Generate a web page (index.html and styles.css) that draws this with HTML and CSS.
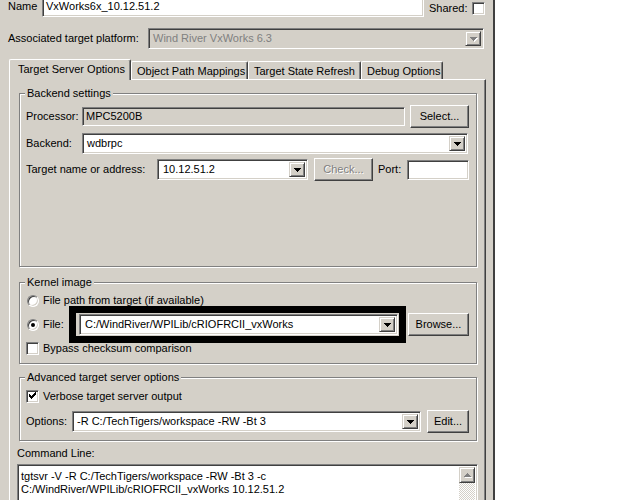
FILE: index.html
```html
<!DOCTYPE html>
<html lang="en">
    <head>
        <meta charset="UTF-8">
        <title>New Target Server Connection</title>
        <link rel="stylesheet" href="styles.css">
    </head>
    <body>
        <div class="dialog">
            <!-- Name -->
            <div class="row name-row">
                <span class="lbl name-lbl">Name</span>
                <div class="field name-field">VxWorks6x_10.12.51.2</div>
                <span class="lbl shared-lbl">Shared:</span>
                <span class="check shared-check"></span>
            </div>

            <!-- Platform -->
            <div class="row platform-row">
                <span class="lbl platform-lbl">Associated target platform:</span>
                <div class="combo disabled platform-combo">
                    <span class="combo-text">Wind River VxWorks 6.3</span>
                    <span class="drop"><svg width="7" height="4"><path d="M0 0h7v1H0zM1 1h5v1H1zM2 2h3v1H2zM3 3h1v1H3z"/></svg></span>
                </div>
            </div>

            <!-- Tabs -->
            <div class="tabs">
                <div class="tab active tab-1">Target Server Options</div>
                <div class="tab tab-2">Object Path Mappings</div>
                <div class="tab tab-3">Target State Refresh</div>
                <div class="tab tab-4">Debug Options</div>
            </div>

            <div class="panel">
                <!-- Backend settings -->
                <div class="group backend-group">
                    <span class="legend">Backend settings</span>
                    <div class="row form-row">
                        <span class="lbl short-lbl">Processor:</span>
                        <div class="field readonly processor-field">MPC5200B</div>
                        <button class="btn select-btn">Select...</button>
                    </div>
                    <div class="row form-row backend-row">
                        <span class="lbl short-lbl">Backend:</span>
                        <div class="combo backend-combo">
                            <span class="combo-text">wdbrpc</span>
                            <span class="drop"><svg width="7" height="4"><path d="M0 0h7v1H0zM1 1h5v1H1zM2 2h3v1H2zM3 3h1v1H3z"/></svg></span>
                        </div>
                    </div>
                    <div class="row form-row target-row">
                        <span class="lbl target-lbl">Target name or address:</span>
                        <div class="combo target-combo">
                            <span class="combo-text">10.12.51.2</span>
                            <span class="drop"><svg width="7" height="4"><path d="M0 0h7v1H0zM1 1h5v1H1zM2 2h3v1H2zM3 3h1v1H3z"/></svg></span>
                        </div>
                        <button class="btn disabled check-btn">Check...</button>
                        <span class="lbl port-lbl">Port:</span>
                        <div class="field port-field"></div>
                    </div>
                </div>

                <!-- Kernel image -->
                <div class="group kernel-group">
                    <span class="legend">Kernel image</span>
                    <div class="row opt-row">
                        <span class="radio"></span>
                        <span class="lbl opt-lbl">File path from target (if available)</span>
                    </div>
                    <div class="row form-row file-row">
                        <span class="radio checked"></span>
                        <span class="lbl file-lbl">File:</span>
                        <div class="combo file-combo">
                            <span class="combo-text">C:/WindRiver/WPILib/cRIOFRCII_vxWorks</span>
                            <span class="drop"><svg width="7" height="4"><path d="M0 0h7v1H0zM1 1h5v1H1zM2 2h3v1H2zM3 3h1v1H3z"/></svg></span>
                            <span class="highlight"></span>
                        </div>
                        <button class="btn browse-btn">Browse...</button>
                    </div>
                    <div class="row opt-row bypass-row">
                        <span class="check"></span>
                        <span class="lbl opt-lbl">Bypass checksum comparison</span>
                    </div>
                </div>

                <!-- Advanced options -->
                <div class="group advanced-group">
                    <span class="legend">Advanced target server options</span>
                    <div class="row opt-row">
                        <span class="check"><svg width="9" height="9"><path d="M1 2h1v3H1zM2 3h1v3H2zM3 4h1v3H3zM4 3h1v3H4zM5 2h1v3H5zM6 1h1v3H6zM7 0h1v3H7z"/></svg></span>
                        <span class="lbl opt-lbl verbose-lbl">Verbose target server output</span>
                    </div>
                    <div class="row form-row options-row">
                        <span class="lbl options-lbl">Options:</span>
                        <div class="combo options-combo">
                            <span class="combo-text">-R C:/TechTigers/workspace -RW -Bt 3</span>
                            <span class="drop"><svg width="7" height="4"><path d="M0 0h7v1H0zM1 1h5v1H1zM2 2h3v1H2zM3 3h1v1H3z"/></svg></span>
                        </div>
                        <button class="btn edit-btn">Edit...</button>
                    </div>
                </div>

                <!-- Command line -->
                <div class="cmd-lbl">Command Line:</div>
                <div class="cmd-box">
                    <div class="cmd-text">tgtsvr -V -R C:/TechTigers/workspace -RW -Bt 3 -c<br>C:/WindRiver/WPILib/cRIOFRCII_vxWorks 10.12.51.2</div>
                    <div class="scrollbar">
                        <span class="scroll-up"><svg width="7" height="4"><path d="M3 0h1v1H3zM2 1h3v1H2zM1 2h5v1H1zM0 3h7v1H0z"/></svg></span>
                        <span class="scroll-track"></span>
                    </div>
                </div>
            </div>
        </div>
    </body>
</html>
```

FILE: styles.css
```css
* {
    box-sizing: border-box;
}
body {
    margin: 0;
    background-color: #ffffff;
    font-family: "Liberation Sans", Arial, sans-serif;
    font-size: 11px;
    line-height: 13px;
    color: #000000;
}
.dialog {
    width: 495px;
    height: 500px;
    padding-left: 8px;
    background-color: #d4d0c8;
    border-right: 2px solid #404040;
    overflow: hidden;
}
.row {
    display: flex;
    align-items: center;
}
.lbl {
    white-space: nowrap;
    flex: none;
}

/* sunken edit boxes */
.field, .combo, .cmd-box {
    border: 1px solid;
    border-color: #808080 #ffffff #ffffff #808080;
    box-shadow: inset 1px 1px 0 #404040, inset -1px -1px 0 #d4d0c8;
    background-color: #ffffff;
    flex: none;
}
.field {
    padding-left: 3px;
    display: flex;
    align-items: center;
    white-space: nowrap;
}
.field.readonly {
    background-color: #d4d0c8;
}
.combo {
    display: flex;
    padding: 2px;
    height: 21px;
    position: relative;
}
.combo-text {
    flex: 1;
    padding-left: 2px;
    display: flex;
    align-items: center;
    white-space: nowrap;
    overflow: hidden;
}
.combo.disabled {
    background-color: #d4d0c8;
    color: #808080;
}
.drop, .scroll-up {
    width: 16px;
    flex: none;
    display: flex;
    align-items: center;
    justify-content: center;
    background-color: #d4d0c8;
    border: 1px solid;
    border-color: #d4d0c8 #404040 #404040 #d4d0c8;
    box-shadow: inset 1px 1px 0 #ffffff, inset -1px -1px 0 #808080;
}
.drop svg {
    margin-top: 1px;
}
.combo.disabled .drop svg {
    fill: #808080;
    filter: drop-shadow(1px 1px 0 #ffffff);
}

/* push buttons */
.btn {
    font: inherit;
    color: #000000;
    height: 23px;
    padding: 0;
    background-color: #d4d0c8;
    border: 1px solid;
    border-color: #ffffff #404040 #404040 #ffffff;
    box-shadow: inset -1px -1px 0 #808080;
    flex: none;
}
.btn.disabled {
    color: #808080;
    text-shadow: 1px 1px 0 #ffffff;
}

/* check boxes and radios */
.check {
    width: 13px;
    height: 13px;
    flex: none;
    display: flex;
    align-items: center;
    justify-content: center;
    background-color: #ffffff;
    border: 1px solid;
    border-color: #808080 #ffffff #ffffff #808080;
    box-shadow: inset 1px 1px 0 #404040, inset -1px -1px 0 #d4d0c8;
}
.radio {
    width: 12px;
    height: 12px;
    flex: none;
    margin-left: 1px;
    border-radius: 50%;
    background-color: #ffffff;
    border: 1px solid;
    border-color: #808080 #ffffff #ffffff #808080;
    box-shadow: inset 1px 1px 0 #404040, inset -1px -1px 0 #d4d0c8;
    display: flex;
    align-items: center;
    justify-content: center;
}
.radio.checked::after {
    content: "";
    width: 4px;
    height: 4px;
    border-radius: 50%;
    background-color: #000000;
}

/* top rows */
.name-row {
    margin-top: -4px;
    height: 21px;
}
.name-lbl {
    width: 34px;
}
.name-field {
    width: 382px;
    height: 21px;
    padding-left: 3px;
}
.shared-lbl {
    width: 43px;
    margin-left: 5px;
    padding-top: 3px;
}
.shared-check {
    margin-top: 3px;
}
.platform-row {
    margin-top: 11px;
    height: 21px;
}
.platform-lbl {
    width: 140px;
}
.platform-combo {
    width: 336px;
}

/* tabs */
.tabs {
    display: flex;
    align-items: flex-end;
    height: 20px;
    margin-top: 10px;
    margin-left: 1px;
}
.tab {
    height: 18px;
    padding: 3px 0 0 5px;
    white-space: nowrap;
    border-left: 1px solid #ffffff;
    border-top: 1px solid #ffffff;
    border-right: 1px solid #404040;
    border-top-left-radius: 2px;
    border-top-right-radius: 2px;
    box-shadow: inset -1px 0 0 #808080;
    flex: none;
}
.tab.active {
    height: 21px;
    margin-bottom: -1px;
    padding-left: 8px;
    background-color: #d4d0c8;
    position: relative;
    z-index: 1;
}
.tab-1 { width: 122px; }
.tab-2 { width: 117px; }
.tab-3 { width: 113px; }
.tab-4 { width: 82px; }

/* tab page */
.panel {
    width: 477px;
    height: 430px;
    margin-left: 1px;
    padding: 13px 8px 0 9px;
    border-left: 1px solid #ffffff;
    border-top: 1px solid #ffffff;
    border-right: 1px solid #404040;
    box-shadow: inset -1px 0 0 #808080;
}
.group {
    position: relative;
    border: 1px solid #808080;
    box-shadow: inset 1px 1px 0 #ffffff, 1px 1px 0 #ffffff;
    padding: 11px 7px 0 6px;
}
.legend {
    position: absolute;
    top: -7px;
    left: 5px;
    padding: 0 2px;
    background-color: #d4d0c8;
    white-space: nowrap;
}
.form-row {
    height: 23px;
}
.backend-group {
    height: 174px;
}
.backend-row {
    margin-top: 4px;
}
.target-row {
    margin-top: 3px;
}
.short-lbl {
    width: 56px;
}
.processor-field {
    width: 323px;
    height: 19px;
}
.select-btn {
    width: 59px;
    margin-left: 5px;
}
.backend-combo {
    width: 386px;
}
.target-lbl {
    width: 131px;
}
.target-combo {
    width: 151px;
}
.target-combo .combo-text {
    padding-left: 3px;
}
.check-btn {
    width: 59px;
    margin-left: 6px;
}
.port-lbl {
    margin-left: 5px;
    width: 29px;
}
.port-field {
    width: 62px;
    height: 20px;
}

.kernel-group {
    height: 82px;
    margin-top: 15px;
}
.opt-row {
    height: 13px;
}
.opt-lbl {
    margin-left: 4px;
}
.file-row {
    margin-top: 6px;
}
.file-lbl {
    width: 36px;
    margin-left: 4px;
}
.file-combo {
    width: 319px;
}
.file-combo .combo-text {
    padding-left: 3px;
}
.highlight {
    position: absolute;
    top: -9px;
    left: -11px;
    right: -9px;
    bottom: -9px;
    border: 7px solid #000000;
}
.browse-btn {
    width: 61px;
    margin-left: 10px;
}
.bypass-row {
    margin-top: 6px;
}

.advanced-group {
    height: 64px;
    margin-top: 13px;
    padding-top: 12px;
}
.verbose-lbl {
    margin-left: 4px;
}
.options-row {
    margin-top: 7px;
}
.options-lbl {
    width: 46px;
}
.options-combo {
    width: 349px;
}
.edit-btn {
    width: 42px;
    margin-left: 6px;
}

/* command line */
.cmd-lbl {
    margin: 6px 0 0 -2px;
}
.cmd-box {
    display: flex;
    width: 461px;
    height: 60px;
    margin: 4px 0 0 -2px;
    padding: 2px;
}
.cmd-text {
    flex: 1;
    padding: 3px 0 0 1px;
    white-space: nowrap;
    overflow: hidden;
}
.scrollbar {
    width: 16px;
    display: flex;
    flex-direction: column;
}
.scroll-up {
    height: 16px;
}
.scroll-up svg {
    fill: #808080;
    filter: drop-shadow(1px 1px 0 #ffffff);
}
.scroll-track {
    flex: 1;
    background: repeating-conic-gradient(#ffffff 0 25%, #d4d0c8 0 50%) 0 0 / 2px 2px;
}
```
